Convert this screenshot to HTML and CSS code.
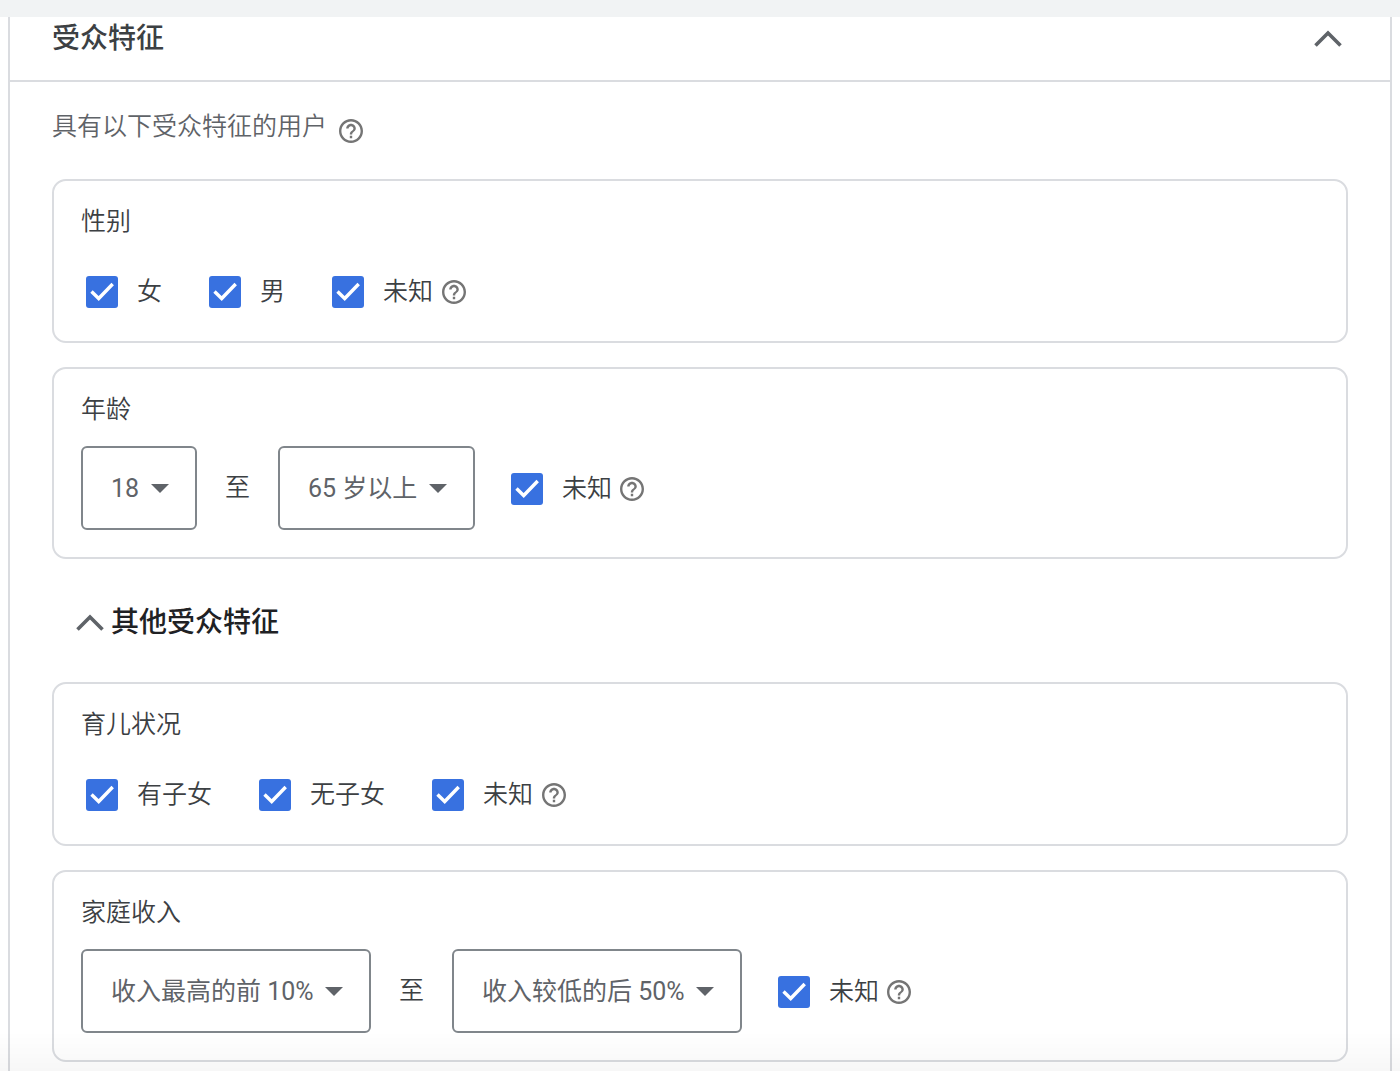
FILE: index.html
```html
<!DOCTYPE html>
<html lang="zh-CN">
<head>
  <meta charset="UTF-8">
  <meta name="viewport" content="width=device-width, initial-scale=1">
  <title>受众特征</title>
  <link rel="stylesheet" href="styles.css">
</head>
<body>
  <!-- shared icons -->
  <svg class="sprite" aria-hidden="true">
    <symbol id="chevron" viewBox="0 0 28 18">
      <path d="M1.5 15.5L14 3l12.5 12.5" fill="none" stroke="currentColor" stroke-width="3.6"/>
    </symbol>
    <symbol id="help" viewBox="2 2 20 20">
      <path d="M11 18h2v-2h-2v2zm1-16C6.48 2 2 6.48 2 12s4.48 10 10 10 10-4.48 10-10S17.52 2 12 2zm0 18c-4.41 0-8-3.59-8-8s3.59-8 8-8 8 3.59 8 8-3.59 8-8 8zm0-14c-2.21 0-4 1.79-4 4h2c0-1.1.9-2 2-2s2 .9 2 2c0 2-3 1.75-3 5h2c0-2.25 3-2.5 3-5 0-2.21-1.79-4-4-4z"/>
    </symbol>
  </svg>

  <div class="topbar"></div>

  <main class="panel">
    <header class="panel-header">
      <h1>受众特征</h1>
      <button type="button" class="toggle" aria-label="收起"><svg class="chevron"><use href="#chevron"/></svg></button>
    </header>

    <div class="panel-body">
      <div class="intro">
        <span>具有以下受众特征的用户</span>
        <svg class="help"><use href="#help"/></svg>
      </div>

      <section class="card">
        <h3>性别</h3>
        <div class="checks">
          <label class="check"><input type="checkbox" checked><span>女</span></label>
          <label class="check"><input type="checkbox" checked><span>男</span></label>
          <div class="unknown">
            <label class="check"><input type="checkbox" checked><span>未知</span></label>
            <svg class="help"><use href="#help"/></svg>
          </div>
        </div>
      </section>

      <section class="card">
        <h3>年龄</h3>
        <div class="range">
          <div class="select">
            <select aria-label="最小年龄"><option>18</option></select>
          </div>
          <span>至</span>
          <div class="select">
            <select aria-label="最大年龄"><option>65 岁以上</option></select>
          </div>
          <div class="unknown">
            <label class="check"><input type="checkbox" checked><span>未知</span></label>
            <svg class="help"><use href="#help"/></svg>
          </div>
        </div>
      </section>

      <h2 class="more">
        <button type="button"><svg class="chevron"><use href="#chevron"/></svg>其他受众特征</button>
      </h2>

      <section class="card">
        <h3>育儿状况</h3>
        <div class="checks">
          <label class="check"><input type="checkbox" checked><span>有子女</span></label>
          <label class="check"><input type="checkbox" checked><span>无子女</span></label>
          <div class="unknown">
            <label class="check"><input type="checkbox" checked><span>未知</span></label>
            <svg class="help"><use href="#help"/></svg>
          </div>
        </div>
      </section>

      <section class="card">
        <h3>家庭收入</h3>
        <div class="range">
          <div class="select">
            <select aria-label="最高收入"><option>收入最高的前 10%</option></select>
          </div>
          <span>至</span>
          <div class="select">
            <select aria-label="最低收入"><option>收入较低的后 50%</option></select>
          </div>
          <div class="unknown">
            <label class="check"><input type="checkbox" checked><span>未知</span></label>
            <svg class="help"><use href="#help"/></svg>
          </div>
        </div>
      </section>
    </div>
  </main>

  <div class="fade"></div>
</body>
</html>
```
FILE: styles.css
```css
* { box-sizing: border-box; }

body {
  margin: 0;
  min-height: 100vh;
  display: flex;
  flex-direction: column;
  background: #fff;
  color: #3c4043;
  font-family: Roboto, "Noto Sans CJK SC", sans-serif;
  font-size: 25px;
  font-weight: 350;
  line-height: 32px;
}

h1, h2, h3 { margin: 0; }

button, select {
  font: inherit;
  color: inherit;
}

button {
  padding: 0;
  border: 0;
  background: none;
  cursor: pointer;
}

.sprite {
  position: absolute;
  width: 0;
  height: 0;
}

.topbar {
  height: 17px;
  background: #f1f3f4;
}

.panel {
  flex: 1;
  margin: 0 8px;
  border: solid #dadce0;
  border-width: 0 2px;
}

.panel-header {
  display: flex;
  align-items: center;
  justify-content: space-between;
  padding: 2px 48px 21px 42px;
  border-bottom: 2px solid #dadce0;
}

.panel-header h1 {
  font-size: 28px;
  font-weight: 500;
  line-height: 40px;
}

.toggle { display: flex; }

.chevron {
  width: 28px;
  height: 18px;
  color: #5f6368;
}

.help {
  flex: none;
  width: 24px;
  height: 24px;
  fill: #757575;
}

.panel-body { padding: 29px 42px 0; }

.intro {
  display: flex;
  align-items: flex-end;
  gap: 12px;
  margin-bottom: 36px;
  color: #5f6368;
}

.card {
  padding: 25px 27px 27px;
  border: 2px solid #dadce0;
  border-radius: 14px;
}

.card + .card { margin-top: 24px; }

.card h3 {
  font-size: 25px;
  font-weight: inherit;
}

/* check boxes */
.checks {
  display: flex;
  gap: 46px;
  margin: 37px 0 5px 5px;
}

.check {
  display: flex;
  align-items: center;
  gap: 19px;
  line-height: 34px;
}

.check input {
  appearance: none;
  width: 32px;
  height: 32px;
  margin: 0;
  border: 2px solid #5f6368;
  border-radius: 3px;
}

.check input:checked {
  border: 0;
  background: #3871e0 url("data:image/svg+xml,%3Csvg xmlns='http://www.w3.org/2000/svg' viewBox='0 0 32 32'%3E%3Cpath d='M5.5 15.5l7.2 7L26.7 8' fill='none' stroke='%23fff' stroke-width='3.4'/%3E%3C/svg%3E") center / 32px no-repeat;
}

.checks .check { margin-right: 1px; }

.unknown {
  display: flex;
  align-items: center;
  gap: 8px;
}

/* from - to drop-downs */
.range {
  display: flex;
  align-items: center;
  gap: 28px;
  margin-top: 20px;
}

.range .unknown { margin: 2px 0 0 8px; }

.select {
  position: relative;
  color: #5f6368;
  font-weight: 400;
}

.select select {
  display: block;
  appearance: none;
  height: 84px;
  padding: 2px 55px 0 28px;
  border: 2px solid #80868b;
  border-radius: 6px;
  background: #fff;
}

.select::after {
  content: "";
  position: absolute;
  top: 38px;
  right: 28px;
  border: solid transparent;
  border-width: 9px 9px 0;
  border-top-color: #5f6368;
  pointer-events: none;
}

.more {
  margin: 44px 0 39px 24px;
  font-size: 28px;
  font-weight: 500;
  line-height: 40px;
  color: #202124;
}

.more button {
  display: flex;
  align-items: center;
  gap: 7px;
}

/* soft shade along the bottom of the window */
.fade {
  position: fixed;
  inset: auto 0 0;
  height: 40px;
  background: linear-gradient(transparent, rgba(0, 0, 0, 0.03));
  pointer-events: none;
}
```
